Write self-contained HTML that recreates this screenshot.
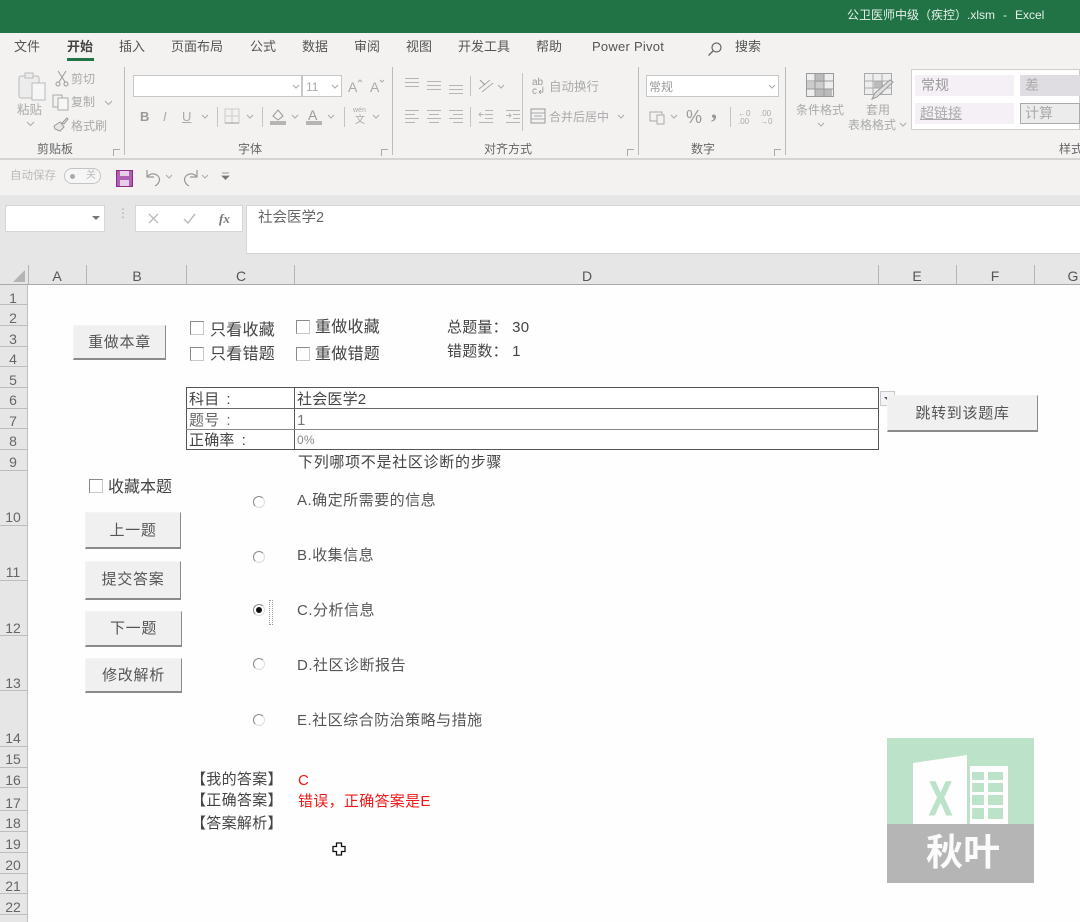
<!DOCTYPE html>
<html lang="zh-CN"><head><meta charset="utf-8"><title>Excel</title>
<style>
html,body{margin:0;padding:0}
body{width:1080px;height:922px;position:relative;overflow:hidden;background:#fefefe;font-family:"Liberation Sans","Noto Sans CJK SC",sans-serif;color:#444}
.t{position:absolute;white-space:nowrap;line-height:16px;font-size:12px}
.a{position:absolute}
.tab{font-size:13px;color:#555;top:39px}
.g{color:#aaa;font-size:12px}
.lab{font-size:12px;color:#666;top:141px}
.col{position:absolute;top:268px;font-size:14px;color:#555;line-height:16px;transform:translateX(-50%)}
.colsep{position:absolute;top:265px;width:1px;height:19px;background:#b5b5b5}
.rn{position:absolute;left:0;width:26px;text-align:center;font-size:14px;color:#666;line-height:16px}
.rl{position:absolute;left:0;width:28px;height:1px;background:#bdbdbd}
.btn{position:absolute;background:#f0f0f0;border-right:1.5px solid #8a8a8a;border-bottom:2px solid #8a8a8a;border-top:1px solid #f4f4f4;border-left:1px solid #f4f4f4;box-sizing:border-box;text-align:center;font-size:15px;color:#555;letter-spacing:.7px}
.cb{position:absolute;width:14px;height:14px;border:1px solid #8a8a8a;border-right-color:#c8c8c8;border-bottom-color:#c8c8c8;background:#fff;box-sizing:border-box}
.ct{position:absolute;font-size:16px;color:#444;line-height:18px;white-space:nowrap;letter-spacing:.25px}
.rad{position:absolute;left:253px;width:12px;height:12px;border-radius:50%;border:1px solid #888;border-right-color:#ddd;border-bottom-color:#ddd;box-sizing:border-box;background:#fff}
.opt{position:absolute;left:297px;font-size:15px;color:#555;line-height:18px;white-space:nowrap;letter-spacing:.5px}
.cell{position:absolute;font-size:15px;line-height:18px;color:#444;white-space:nowrap;letter-spacing:.2px}
.ans{position:absolute;font-size:15px;line-height:18px;color:#444;white-space:nowrap;letter-spacing:.3px}
.sep{position:absolute;width:1px;background:#c4c4c4}
svg{position:absolute;overflow:visible}
</style></head><body>

<!-- title bar -->
<div class="a" style="left:0;top:0;width:1080px;height:33px;background:#217346"></div>
<div class="t" style="left:847px;top:7px;color:#e6efe9;font-size:12px">公卫医师中级（疾控）.xlsm</div>
<div class="t" style="left:1003px;top:7px;color:#e6efe9;font-size:12px">-</div>
<div class="t" style="left:1015px;top:7px;color:#e6efe9;font-size:12px">Excel</div>

<!-- ribbon bg -->
<div class="a" style="left:0;top:33px;width:1080px;height:162px;background:#f3f2f1"></div>
<div class="a" style="left:0;top:158px;width:1080px;height:2px;background:#d4d4d4"></div>
<div class="a" style="left:0;top:195px;width:1080px;height:71px;background:#e7e6e6"></div>

<!-- tabs -->
<div class="t tab" style="left:14px">文件</div>
<div class="t tab" style="left:67px;font-weight:bold;color:#444">开始</div>
<div class="a" style="left:67px;top:58px;width:27px;height:3px;background:#217346"></div>
<div class="t tab" style="left:119px">插入</div>
<div class="t tab" style="left:171px">页面布局</div>
<div class="t tab" style="left:250px">公式</div>
<div class="t tab" style="left:302px">数据</div>
<div class="t tab" style="left:354px">审阅</div>
<div class="t tab" style="left:406px">视图</div>
<div class="t tab" style="left:458px">开发工具</div>
<div class="t tab" style="left:536px">帮助</div>
<div class="t tab" style="left:592px;letter-spacing:.25px">Power Pivot</div>
<svg style="left:707px;top:41px" width="16" height="16"><circle cx="9.500" cy="6.500" r="4.500" fill="none" stroke="#666" stroke-width="1.200"/><path d="M6 10L1.500 14.500" stroke="#666" stroke-width="1.300"/></svg>
<div class="t tab" style="left:735px">搜索</div>

<!-- clipboard -->
<svg style="left:17px;top:70px" width="30" height="32"><rect x="2" y="6" width="20" height="22" rx="2" fill="#ececec" stroke="#bbb"/><rect x="8" y="3" width="8" height="5" fill="#ececec" stroke="#bbb"/><rect x="15" y="13" width="13" height="17" fill="#f6f6f6" stroke="#bbb"/></svg>
<div class="t g" style="left:17px;top:102px;font-size:12.500px">粘贴</div>
<svg style="left:26px;top:121px" width="9" height="6"><path d="M1 1l3.500 3.500L8 1" fill="none" stroke="#aaa"/></svg>
<svg style="left:55px;top:70px" width="14" height="17"><path d="M3 1l7 11M11 1L4 12" stroke="#999" fill="none"/><circle cx="3" cy="14" r="2" fill="none" stroke="#999"/><circle cx="11" cy="14" r="2" fill="none" stroke="#999"/></svg>
<div class="t g" style="left:71px;top:71px">剪切</div>
<svg style="left:52px;top:94px" width="17" height="16"><rect x="1" y="1" width="9" height="12" fill="none" stroke="#aaa"/><rect x="6" y="4" width="10" height="12" fill="#f6f6f6" stroke="#aaa"/></svg>
<div class="t g" style="left:71px;top:94px">复制</div>
<svg style="left:104px;top:100px" width="9" height="6"><path d="M1 1l3.500 3.500L8 1" fill="none" stroke="#aaa"/></svg>
<svg style="left:53px;top:117px" width="16" height="15"><path d="M1 9l6-4 4 5-4 4-5-2zM9 6l5-5 1 1-4 5z" fill="#e8e8e8" stroke="#999"/></svg>
<div class="t g" style="left:71px;top:118px">格式刷</div>
<div class="t lab" style="left:37px">剪贴板</div>
<div class="sep" style="left:124px;top:67px;height:88px;background:#bbb"></div>
<div class="a" style="left:113px;top:149px;width:6px;height:6px;border-left:1px solid #aaa;border-top:1px solid #aaa"></div>

<!-- font -->
<div class="a" style="left:133px;top:75px;width:169px;height:22px;background:#fff;border:1px solid #c8c8c8;box-sizing:border-box"></div>
<div class="a" style="left:302px;top:75px;width:40px;height:22px;background:#fff;border:1px solid #c8c8c8;box-sizing:border-box"></div>
<div class="t g" style="left:306px;top:79px">11</div>
<svg style="left:292px;top:84px" width="9" height="6"><path d="M1 1l3 3 3-3" fill="none" stroke="#aaa"/></svg>
<svg style="left:331px;top:84px" width="9" height="6"><path d="M1 1l3 3 3-3" fill="none" stroke="#aaa"/></svg>
<div class="t" style="left:348px;top:79px;font-size:14px;color:#aaa">A</div>
<svg style="left:357px;top:79px" width="6" height="4"><path d="M1 3l2-2 2 2" fill="none" stroke="#aaa"/></svg>
<div class="t" style="left:370px;top:79px;font-size:14px;color:#aaa">A</div>
<svg style="left:379px;top:79px" width="6" height="4"><path d="M1 1l2 2 2-2" fill="none" stroke="#aaa"/></svg>
<div class="t" style="left:140px;top:109px;font-weight:bold;color:#999;font-size:13px">B</div>
<div class="t" style="left:163px;top:109px;font-style:italic;color:#aaa;font-size:13px">I</div>
<div class="t" style="left:182px;top:109px;text-decoration:underline;color:#aaa;font-size:13px">U</div>
<svg style="left:201px;top:114px" width="9" height="6"><path d="M1 1l3 3 3-3" fill="none" stroke="#aaa"/></svg>
<div class="sep" style="left:217px;top:107px;height:20px"></div>
<svg style="left:224px;top:108px" width="16" height="16"><rect x="1" y="1" width="14" height="14" fill="none" stroke="#ccc"/><path d="M8 1v14M1 8h14" stroke="#ccc"/><path d="M1 15h14" stroke="#999"/></svg>
<svg style="left:246px;top:114px" width="9" height="6"><path d="M1 1l3 3 3-3" fill="none" stroke="#aaa"/></svg>
<div class="sep" style="left:262px;top:107px;height:20px"></div>
<svg style="left:270px;top:108px" width="16" height="17"><path d="M3 8l5-6 5 6-5 4z" fill="none" stroke="#999"/><rect y="13" width="16" height="4" fill="#b5b5b5"/></svg>
<svg style="left:291px;top:114px" width="9" height="6"><path d="M1 1l3 3 3-3" fill="none" stroke="#aaa"/></svg>
<div class="t" style="left:308px;top:107px;font-size:14px;color:#999">A</div>
<div class="a" style="left:306px;top:121px;width:16px;height:4px;background:#b5b5b5"></div>
<svg style="left:327px;top:114px" width="9" height="6"><path d="M1 1l3 3 3-3" fill="none" stroke="#aaa"/></svg>
<div class="sep" style="left:344px;top:107px;height:20px"></div>
<div class="t" style="left:353px;top:107px;font-size:7px;line-height:8px;color:#aaa">wén</div>
<div class="t" style="left:355px;top:115px;font-size:10px;line-height:11px;color:#aaa">文</div>
<svg style="left:372px;top:114px" width="9" height="6"><path d="M1 1l3 3 3-3" fill="none" stroke="#aaa"/></svg>
<div class="t lab" style="left:238px">字体</div>
<div class="sep" style="left:392px;top:67px;height:88px;background:#bbb"></div>
<div class="a" style="left:381px;top:149px;width:6px;height:6px;border-left:1px solid #aaa;border-top:1px solid #aaa"></div>

<!-- alignment -->
<svg style="left:404px;top:76px" width="66" height="20" stroke="#b5b5b5"><path d="M1 2.500h14M1 6.500h14M1 10.500h14"/><path d="M23 5.500h14M23 9.500h14M23 13.500h14"/><path d="M45 9.500h14M45 13.500h14M45 17.500h14"/></svg>
<svg style="left:404px;top:108px" width="66" height="16" stroke="#b5b5b5"><path d="M1 2.500h14M1 6.500h10M1 10.500h14M1 14.500h10"/><path d="M23 2.500h14M25 6.500h10M23 10.500h14M25 14.500h10"/><path d="M45 2.500h14M49 6.500h10M45 10.500h14M49 14.500h10"/></svg>
<div class="sep" style="left:470px;top:76px;height:20px"></div>
<div class="sep" style="left:470px;top:107px;height:20px"></div>
<svg style="left:477px;top:77px" width="18" height="17"><path d="M2 12L13 3M5 15L16 6" stroke="#aaa" fill="none"/><path d="M3 3l5 5" stroke="#999"/></svg>
<svg style="left:497px;top:84px" width="9" height="6"><path d="M1 1l3 3 3-3" fill="none" stroke="#aaa"/></svg>
<svg style="left:478px;top:108px" width="56" height="16" stroke="#b5b5b5" fill="none"><path d="M7 2.500h8M7 6.500h8M7 10.500h8M1 14.500h14M1 6.500h5M3 4.500L1 6.500l2 2"/><path d="M28 2.500h14M35 6.500h7M35 10.500h7M28 14.500h14M28 7.500h5M31 5.500l2 2-2 2"/></svg>
<div class="sep" style="left:522px;top:73px;height:58px"></div>
<div class="t" style="left:532px;top:78px;font-size:10px;line-height:9px;color:#999">ab<br>c↲</div>
<div class="t g" style="left:549px;top:79px;font-size:12.500px">自动换行</div>
<svg style="left:530px;top:108px" width="16" height="16"><rect x="1" y="1" width="14" height="14" fill="none" stroke="#999"/><path d="M1 5h14M1 11h14M4 8h8" stroke="#aaa"/></svg>
<div class="t g" style="left:549px;top:109px">合并后居中</div>
<svg style="left:617px;top:114px" width="9" height="6"><path d="M1 1l3 3 3-3" fill="none" stroke="#aaa"/></svg>
<div class="t lab" style="left:484px">对齐方式</div>
<div class="sep" style="left:638px;top:67px;height:88px;background:#bbb"></div>
<div class="a" style="left:627px;top:149px;width:6px;height:6px;border-left:1px solid #aaa;border-top:1px solid #aaa"></div>

<!-- number -->
<div class="a" style="left:646px;top:75px;width:133px;height:22px;background:#fff;border:1px solid #c8c8c8;box-sizing:border-box"></div>
<div class="t" style="left:649px;top:79px;color:#999">常规</div>
<svg style="left:768px;top:84px" width="9" height="6"><path d="M1 1l3 3 3-3" fill="none" stroke="#aaa"/></svg>
<svg style="left:649px;top:110px" width="17" height="15"><rect x="1" y="2" width="12" height="9" fill="none" stroke="#aaa"/><rect x="8" y="5" width="7" height="9" fill="#f3f2f1" stroke="#aaa"/></svg>
<svg style="left:670px;top:114px" width="9" height="6"><path d="M1 1l3 3 3-3" fill="none" stroke="#aaa"/></svg>
<div class="t" style="left:686px;top:109px;font-size:18px;color:#999">%</div>
<div class="t" style="left:711px;top:103px;font-size:24px;font-weight:bold;color:#999;font-family:'Liberation Serif',serif">,</div>
<div class="sep" style="left:730px;top:107px;height:20px"></div>
<div class="t" style="left:738px;top:110px;font-size:8px;line-height:8px;color:#aaa">←0<br>.00</div>
<div class="t" style="left:760px;top:110px;font-size:8px;line-height:8px;color:#aaa">.00<br>→0</div>
<div class="t lab" style="left:691px">数字</div>
<div class="sep" style="left:785px;top:67px;height:88px;background:#bbb"></div>
<div class="a" style="left:774px;top:149px;width:6px;height:6px;border-left:1px solid #aaa;border-top:1px solid #aaa"></div>

<!-- styles -->
<svg style="left:806px;top:73px" width="28" height="24"><rect x=".5" y=".5" width="27" height="23" fill="#eee" stroke="#999"/><rect x="9" y="1" width="9" height="8" fill="#bbb"/><rect x="1" y="9" width="17" height="7" fill="#ccc"/><rect x="9" y="16" width="17" height="7" fill="#bbb"/><path d="M9 1v22M18 1v22M1 8h26M1 16h26" stroke="#999" fill="none"/></svg>
<div class="t" style="left:796px;top:102px;color:#aaa;font-size:12px">条件格式</div>
<svg style="left:817px;top:122px" width="9" height="6"><path d="M1 1l3 3 3-3" fill="none" stroke="#aaa"/></svg>
<svg style="left:864px;top:73px" width="30" height="27"><rect x=".5" y=".5" width="27" height="21" fill="#eee" stroke="#aaa"/><rect x="10" y="8" width="9" height="7" fill="#bbb"/><path d="M9 1v21M18 1v21M1 8h26M1 15h26" stroke="#aaa" fill="none"/><path d="M29 9L13 24l-5 2 3-6L26 7z" fill="#ddd" stroke="#999"/></svg>
<div class="t" style="left:866px;top:102px;color:#aaa">套用</div>
<div class="t" style="left:848px;top:117px;color:#aaa">表格格式</div>
<svg style="left:899px;top:122px" width="9" height="6"><path d="M1 1l3 3 3-3" fill="none" stroke="#aaa"/></svg>
<div class="a" style="left:911px;top:69px;width:169px;height:61px;background:#fff;border:1px solid #cfcfcf;box-sizing:border-box"></div>
<div class="a" style="left:915px;top:75px;width:99px;height:21px;background:#f5f0f6"></div>
<div class="t" style="left:921px;top:77px;color:#999;font-size:14px">常规</div>
<div class="a" style="left:1020px;top:75px;width:60px;height:21px;background:#e0dde2"></div>
<div class="t" style="left:1025px;top:77px;color:#aaa;font-size:14px">差</div>
<div class="a" style="left:915px;top:103px;width:99px;height:21px;background:#f5f0f6"></div>
<div class="t" style="left:920px;top:105px;color:#aaa;font-size:14px;text-decoration:underline">超链接</div>
<div class="a" style="left:1020px;top:103px;width:60px;height:21px;background:#ececec;border:1px solid #aaa;box-sizing:border-box"></div>
<div class="t" style="left:1025px;top:105px;color:#aaa;font-size:14px">计算</div>
<div class="t lab" style="left:1059px">样式</div>

<!-- qat -->
<div class="t" style="left:10px;top:168px;color:#bbb;font-size:11.500px">自动保存</div>
<div class="a" style="left:64px;top:168px;width:37px;height:16px;border:1px solid #c4c4c4;border-radius:9px;box-sizing:border-box;background:#f6f6f6"></div>
<div class="a" style="left:70px;top:174px;width:5px;height:5px;border-radius:50%;background:#aaa"></div>
<div class="t" style="left:86px;top:168px;color:#bbb;font-size:10px">关</div>
<svg style="left:116px;top:170px" width="17" height="17"><rect x=".5" y=".5" width="16" height="16" fill="#b060b0" stroke="#8a2c8a"/><rect x="4" y="1" width="9" height="5" fill="#e8cde8"/><rect x="4" y="10" width="9" height="6" fill="#e8cde8"/></svg>
<svg style="left:145px;top:168px" width="17" height="19"><path d="M2 2v7h7M2 9c3-4 8-4 11-1 3 3 1 8-3 10" fill="none" stroke="#999" stroke-width="1.200"/></svg>
<svg style="left:165px;top:174px" width="8" height="6"><path d="M1 1l3 3 3-3" fill="none" stroke="#aaa"/></svg>
<svg style="left:182px;top:168px" width="17" height="19"><path d="M15 2v7H8M15 9c-3-4-8-4-11-1-3 3-1 8 3 10" fill="none" stroke="#999" stroke-width="1.200"/></svg>
<svg style="left:201px;top:174px" width="8" height="6"><path d="M1 1l3 3 3-3" fill="none" stroke="#aaa"/></svg>
<svg style="left:221px;top:172px" width="9" height="9"><path d="M1 1h7M1 4h7l-3.500 3.500z" fill="#777" stroke="#777" stroke-width=".7"/></svg>

<!-- formula bar -->
<div class="a" style="left:5px;top:205px;width:100px;height:27px;background:#fff;border:1px solid #d6d6d6;box-sizing:border-box"></div>
<div class="a" style="left:92px;top:216px;border-left:4px solid transparent;border-right:4px solid transparent;border-top:4px solid #777"></div>
<div class="t" style="left:117px;top:211px;color:#aaa;font-size:12px;line-height:5px">⋮</div>
<div class="a" style="left:135px;top:205px;width:108px;height:27px;background:#fff;border:1px solid #d6d6d6;box-sizing:border-box"></div>
<svg style="left:148px;top:213px" width="11" height="11"><path d="M1 1l9 9M10 1l-9 9" stroke="#bbb" stroke-width="1.300"/></svg>
<svg style="left:183px;top:213px" width="13" height="11"><path d="M1 6l4 4 7-9" fill="none" stroke="#bbb" stroke-width="1.500"/></svg>
<div class="t" style="left:219px;top:211px;font-family:'Liberation Serif',serif;font-style:italic;font-weight:bold;color:#777;font-size:13px">fx</div>
<div class="a" style="left:246px;top:205px;width:834px;height:49px;background:#fff;border-left:1px solid #d6d6d6;border-top:1px solid #d6d6d6;border-bottom:1px solid #cfcfcf;box-sizing:border-box"></div>
<div class="t" style="left:258px;top:210px;color:#666;font-size:14.500px">社会医学2</div>

<!-- column header -->
<div class="a" style="left:0;top:265px;width:1080px;height:20px;background:#e7e6e6;border-bottom:1px solid #a9a9a9;box-sizing:border-box"></div>
<svg style="left:12px;top:269px" width="14" height="14"><path d="M13 1v12H1z" fill="#b4b4b4"/></svg>
<div class="col" style="left:57px">A</div>
<div class="col" style="left:137px">B</div>
<div class="col" style="left:241px">C</div>
<div class="col" style="left:587px">D</div>
<div class="col" style="left:917px">E</div>
<div class="col" style="left:995px">F</div>
<div class="col" style="left:1073px">G</div>
<div class="colsep" style="left:28px"></div><div class="colsep" style="left:86px"></div><div class="colsep" style="left:186px"></div><div class="colsep" style="left:294px"></div><div class="colsep" style="left:878px"></div><div class="colsep" style="left:956px"></div><div class="colsep" style="left:1034px"></div>

<!-- row header -->
<div class="a" style="left:0;top:285px;width:28px;height:637px;background:#e7e6e6;border-right:1px solid #bfbfbf;box-sizing:border-box"></div>
<div class="rn" style="top:290px">1</div><div class="rl" style="top:304px"></div>
<div class="rn" style="top:310px">2</div><div class="rl" style="top:325px"></div>
<div class="rn" style="top:331px">3</div><div class="rl" style="top:346px"></div>
<div class="rn" style="top:351px">4</div><div class="rl" style="top:366px"></div>
<div class="rn" style="top:372px">5</div><div class="rl" style="top:387px"></div>
<div class="rn" style="top:392px">6</div><div class="rl" style="top:408px"></div>
<div class="rn" style="top:413px">7</div><div class="rl" style="top:428px"></div>
<div class="rn" style="top:433px">8</div><div class="rl" style="top:449px"></div>
<div class="rn" style="top:454px">9</div><div class="rl" style="top:470px"></div>
<div class="rn" style="top:509px">10</div><div class="rl" style="top:525px"></div>
<div class="rn" style="top:564px">11</div><div class="rl" style="top:580px"></div>
<div class="rn" style="top:620px">12</div><div class="rl" style="top:635px"></div>
<div class="rn" style="top:675px">13</div><div class="rl" style="top:690px"></div>
<div class="rn" style="top:730px">14</div><div class="rl" style="top:746px"></div>
<div class="rn" style="top:751px">15</div><div class="rl" style="top:767px"></div>
<div class="rn" style="top:772px">16</div><div class="rl" style="top:787px"></div>
<div class="rn" style="top:795px">17</div><div class="rl" style="top:810px"></div>
<div class="rn" style="top:815px">18</div><div class="rl" style="top:831px"></div>
<div class="rn" style="top:836px">19</div><div class="rl" style="top:852px"></div>
<div class="rn" style="top:857px">20</div><div class="rl" style="top:873px"></div>
<div class="rn" style="top:878px">21</div><div class="rl" style="top:893px"></div>
<div class="rn" style="top:899px">22</div><div class="rl" style="top:914px"></div>

<!-- top controls -->
<div class="btn" style="left:73px;top:325px;width:93px;height:35px;line-height:34px">重做本章</div>
<div class="cb" style="left:190px;top:321px"></div><div class="ct" style="left:210px;top:322px">只看收藏</div>
<div class="cb" style="left:190px;top:347px"></div><div class="ct" style="left:210px;top:346px">只看错题</div>
<div class="cb" style="left:296px;top:320px"></div><div class="ct" style="left:315px;top:319px">重做收藏</div>
<div class="cb" style="left:296px;top:347px"></div><div class="ct" style="left:315px;top:346px">重做错题</div>
<div class="cell" style="left:447px;top:319px">总题量： 30</div>
<div class="cell" style="left:447px;top:343px">错题数： 1</div>

<!-- table -->
<div class="a" style="left:186px;top:387px;width:693px;height:63px;border:1px solid #555;box-sizing:border-box;background:#fff"></div>
<div class="a" style="left:294px;top:387px;width:1px;height:63px;background:#555"></div>
<div class="a" style="left:186px;top:408px;width:693px;height:1px;background:#666"></div>
<div class="a" style="left:186px;top:429px;width:693px;height:1px;background:#888"></div>
<div class="cell" style="left:189px;top:391px">科目<span style="margin-left:7px">:</span></div>
<div class="cell" style="left:297px;top:391px">社会医学2</div>
<div class="cell" style="left:189px;top:412px;color:#666">题号<span style="margin-left:7px">:</span></div>
<div class="cell" style="left:297px;top:412px;color:#777">1</div>
<div class="cell" style="left:189px;top:432px">正确率<span style="margin-left:7px">:</span></div>
<div class="cell" style="left:297px;top:431px;color:#888;font-size:12px">0%</div>
<div class="a" style="left:880px;top:391px;width:15px;height:15px;background:#f4f4f8;border:1px solid #c8c8c8;box-sizing:border-box"></div>
<div class="a" style="left:884px;top:397px;border-left:3.500px solid transparent;border-right:3.500px solid transparent;border-top:3.500px solid #456"></div>
<div class="btn" style="left:887px;top:395px;width:151px;height:37px;line-height:35px">跳转到该题库</div>

<!-- question -->
<div class="opt" style="left:298px;top:454px;color:#444;letter-spacing:.7px">下列哪项不是社区诊断的步骤</div>
<div class="cb" style="left:89px;top:479px"></div><div class="ct" style="left:108px;top:479px;letter-spacing:0">收藏本题</div>
<div class="btn" style="left:85px;top:512px;width:96px;height:37px;line-height:35px">上一题</div>
<div class="btn" style="left:85px;top:561px;width:96px;height:39px;line-height:36px">提交答案</div>
<div class="btn" style="left:85px;top:611px;width:97px;height:36px;line-height:34px">下一题</div>
<div class="btn" style="left:85px;top:658px;width:97px;height:35px;line-height:33px">修改解析</div>

<div class="rad" style="top:496px"></div><div class="opt" style="top:492px">A.确定所需要的信息</div>
<div class="rad" style="top:551px"></div><div class="opt" style="top:547px">B.收集信息</div>
<div class="rad" style="top:604px"></div><div class="a" style="left:256px;top:607px;width:6px;height:6px;border-radius:50%;background:#111"></div>
<div class="a" style="left:269px;top:600px;width:2px;height:23px;border:1px dotted #999"></div>
<div class="opt" style="top:602px">C.分析信息</div>
<div class="rad" style="top:658px"></div><div class="opt" style="top:657px">D.社区诊断报告</div>
<div class="rad" style="top:714px"></div><div class="opt" style="top:712px">E.社区综合防治策略与措施</div>

<!-- answers -->
<div class="ans" style="left:191px;top:771px">【我的答案】</div>
<div class="ans" style="left:191px;top:792px">【正确答案】</div>
<div class="ans" style="left:191px;top:815px">【答案解析】</div>
<div class="ans" style="left:298px;top:772px;color:#f01818">C</div>
<div class="ans" style="left:298px;top:793px;color:#f01818">错误，正确答案是E</div>
<svg style="left:332px;top:842px" width="14" height="15"><path d="M4.500 1h5v3.500H13v5H9.500V13h-5V9.500H1v-5h3.500z" fill="#fff" stroke="#111" stroke-width="1.300"/></svg>

<!-- logo -->
<div class="a" style="left:887px;top:738px;width:147px;height:145px;background:#bce2c9"></div>
<svg style="left:887px;top:738px" width="147" height="86"><path d="M26 25L80 17V86H26z" fill="#fefefe"/><path d="M83 28h38v58H83z" fill="#fefefe"/><path d="M85 34h12v8H85zM101 34h15v8H101zM85 45h12v9H85zM101 45h15v9H101zM85 57h12v10H85zM101 57h15v10H101zM85 70h12v11H85zM101 70h15v11H101z" fill="#bce2c9"/></svg>
<div class="t" style="left:929px;top:778px;font-size:48px;line-height:44px;font-weight:bold;color:#bce2c9;-webkit-text-stroke:1px #bce2c9;transform:scaleX(.72);transform-origin:left top">X</div>
<div class="a" style="left:887px;top:824px;width:147px;height:59px;background:#b5b5b5"></div>
<div class="t" style="left:926px;top:833px;font-size:37px;line-height:40px;font-weight:bold;color:#fbfbfb">秋叶</div>
</body></html>
